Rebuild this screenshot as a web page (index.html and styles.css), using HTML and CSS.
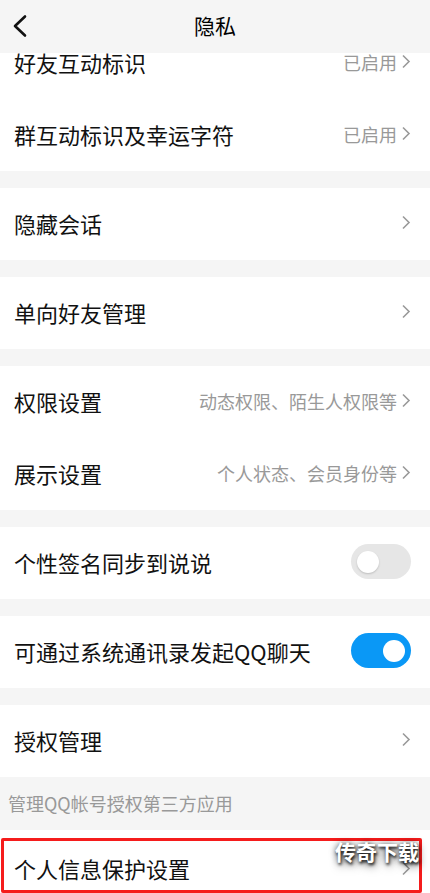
FILE: index.html
```html
<!DOCTYPE html>
<html lang="zh-CN">
<head>
<meta charset="utf-8">
<title>隐私</title>
<link rel="stylesheet" href="styles.css">
</head>
<body>
<header class="topbar">
  <svg class="back" width="16" height="24" viewBox="0 0 16 24"><path d="M13 2.5 L3 12 L13 21.5" fill="none" stroke="#111" stroke-width="2.6" stroke-linecap="round" stroke-linejoin="round"/></svg>
  <h1 class="title">隐私</h1>
</header>
<main class="list">
  <section class="group">
    <div class="row"><span class="label">好友互动标识</span><span class="detail">已启用<svg class="chev" width="10" height="15" viewBox="0 0 10 15"><path d="M2 1.5 L8 7.5 L2 13.5" fill="none" stroke="#9a9a9a" stroke-width="1.6"/></svg></span></div>
    <div class="row"><span class="label">群互动标识及幸运字符</span><span class="detail">已启用<svg class="chev" width="10" height="15" viewBox="0 0 10 15"><path d="M2 1.5 L8 7.5 L2 13.5" fill="none" stroke="#9a9a9a" stroke-width="1.6"/></svg></span></div>
  </section>
  <section class="group">
    <div class="row"><span class="label">隐藏会话</span><span class="detail"><svg class="chev" width="10" height="15" viewBox="0 0 10 15"><path d="M2 1.5 L8 7.5 L2 13.5" fill="none" stroke="#9a9a9a" stroke-width="1.6"/></svg></span></div>
  </section>
  <section class="group">
    <div class="row"><span class="label">单向好友管理</span><span class="detail"><svg class="chev" width="10" height="15" viewBox="0 0 10 15"><path d="M2 1.5 L8 7.5 L2 13.5" fill="none" stroke="#9a9a9a" stroke-width="1.6"/></svg></span></div>
  </section>
  <section class="group">
    <div class="row"><span class="label">权限设置</span><span class="detail">动态权限、陌生人权限等<svg class="chev" width="10" height="15" viewBox="0 0 10 15"><path d="M2 1.5 L8 7.5 L2 13.5" fill="none" stroke="#9a9a9a" stroke-width="1.6"/></svg></span></div>
    <div class="row"><span class="label">展示设置</span><span class="detail">个人状态、会员身份等<svg class="chev" width="10" height="15" viewBox="0 0 10 15"><path d="M2 1.5 L8 7.5 L2 13.5" fill="none" stroke="#9a9a9a" stroke-width="1.6"/></svg></span></div>
  </section>
  <section class="group">
    <div class="row"><span class="label">个性签名同步到说说</span><span class="switch"><span class="knob"></span></span></div>
  </section>
  <section class="group">
    <div class="row"><span class="label">可通过系统通讯录发起QQ聊天</span><span class="switch on"><span class="knob"></span></span></div>
  </section>
  <section class="group group-captioned">
    <div class="row"><span class="label">授权管理</span><span class="detail"><svg class="chev" width="10" height="15" viewBox="0 0 10 15"><path d="M2 1.5 L8 7.5 L2 13.5" fill="none" stroke="#9a9a9a" stroke-width="1.6"/></svg></span></div>
  </section>
  <p class="caption">管理QQ帐号授权第三方应用</p>
  <section class="group group-last">
    <div class="row row-low"><span class="label">个人信息保护设置</span><span class="detail"><svg class="chev" width="10" height="15" viewBox="0 0 10 15"><path d="M2 1.5 L8 7.5 L2 13.5" fill="none" stroke="#9a9a9a" stroke-width="1.6"/></svg></span></div>
    <div class="mark-box"></div>
    <div class="watermark">传奇下载</div>
  </section>
</main>
</body>
</html>
```
FILE: styles.css
```css
* { box-sizing: border-box; }
html, body {
  margin: 0;
  padding: 0;
}
body {
  width: 430px;
  height: 893px;
  overflow: hidden;
  background: #f5f5f5;
  font-family: "Noto Sans CJK SC", "Noto Sans", sans-serif;
  color: #111;
  position: relative;
}
.topbar {
  position: fixed;
  top: 0;
  left: 0;
  right: 0;
  height: 53px;
  background: #f5f5f5;
  display: flex;
  align-items: center;
  justify-content: center;
  padding-bottom: 2px;
  z-index: 5;
}
.back {
  position: absolute;
  left: 12px;
  top: 14px;
}
.title {
  margin: 0;
  font-size: 21px;
  font-weight: 400;
  line-height: 1;
  color: #000;
}
.list {
  padding-top: 27px;
  display: flex;
  flex-direction: column;
}
.group {
  background: #fff;
  margin-bottom: 17px;
  position: relative;
}
.group-captioned { margin-bottom: 0; }
.group-last { margin-bottom: 0; }
.row {
  height: 72px;
  display: flex;
  align-items: center;
  justify-content: space-between;
  padding: 0 19px 3px 14px;
}
.row-low { padding-top: 4px; padding-bottom: 0; }
.label {
  font-size: 22px;
  line-height: 1;
  color: #111;
  white-space: nowrap;
}
.detail {
  display: flex;
  align-items: center;
  gap: 4px;
  font-size: 18px;
  line-height: 1;
  color: #999;
  white-space: nowrap;
}
.chev { display: block; }
.switch {
  width: 60px;
  height: 35px;
  border-radius: 18px;
  background: #e6e6e6;
  display: flex;
  align-items: center;
  padding: 0 6px;
}
.switch .knob {
  width: 22px;
  height: 22px;
  border-radius: 50%;
  background: #fff;
  box-shadow: 0 1px 2px rgba(0,0,0,0.18);
}
.switch.on {
  background: #0a98f6;
  justify-content: flex-end;
}
.switch.on .knob { box-shadow: none; }
.caption {
  margin: 0;
  height: 53px;
  display: flex;
  align-items: center;
  padding-left: 8px;
  padding-bottom: 2px;
  font-size: 18px;
  color: #999;
}
.mark-box {
  position: absolute;
  left: 1px;
  top: 8px;
  width: 421px;
  height: 55px;
  border: 3px solid #f51c1c;
  border-radius: 2px;
}
.watermark {
  position: absolute;
  left: 335px;
  top: 11px;
  font-size: 21px;
  font-weight: 700;
  color: #fff;
  line-height: 1;
  text-shadow: 1px 2px 3px rgba(0,0,0,0.85), 0 0 6px rgba(0,0,0,0.6), 2px 4px 8px rgba(0,0,0,0.5);
}
```
